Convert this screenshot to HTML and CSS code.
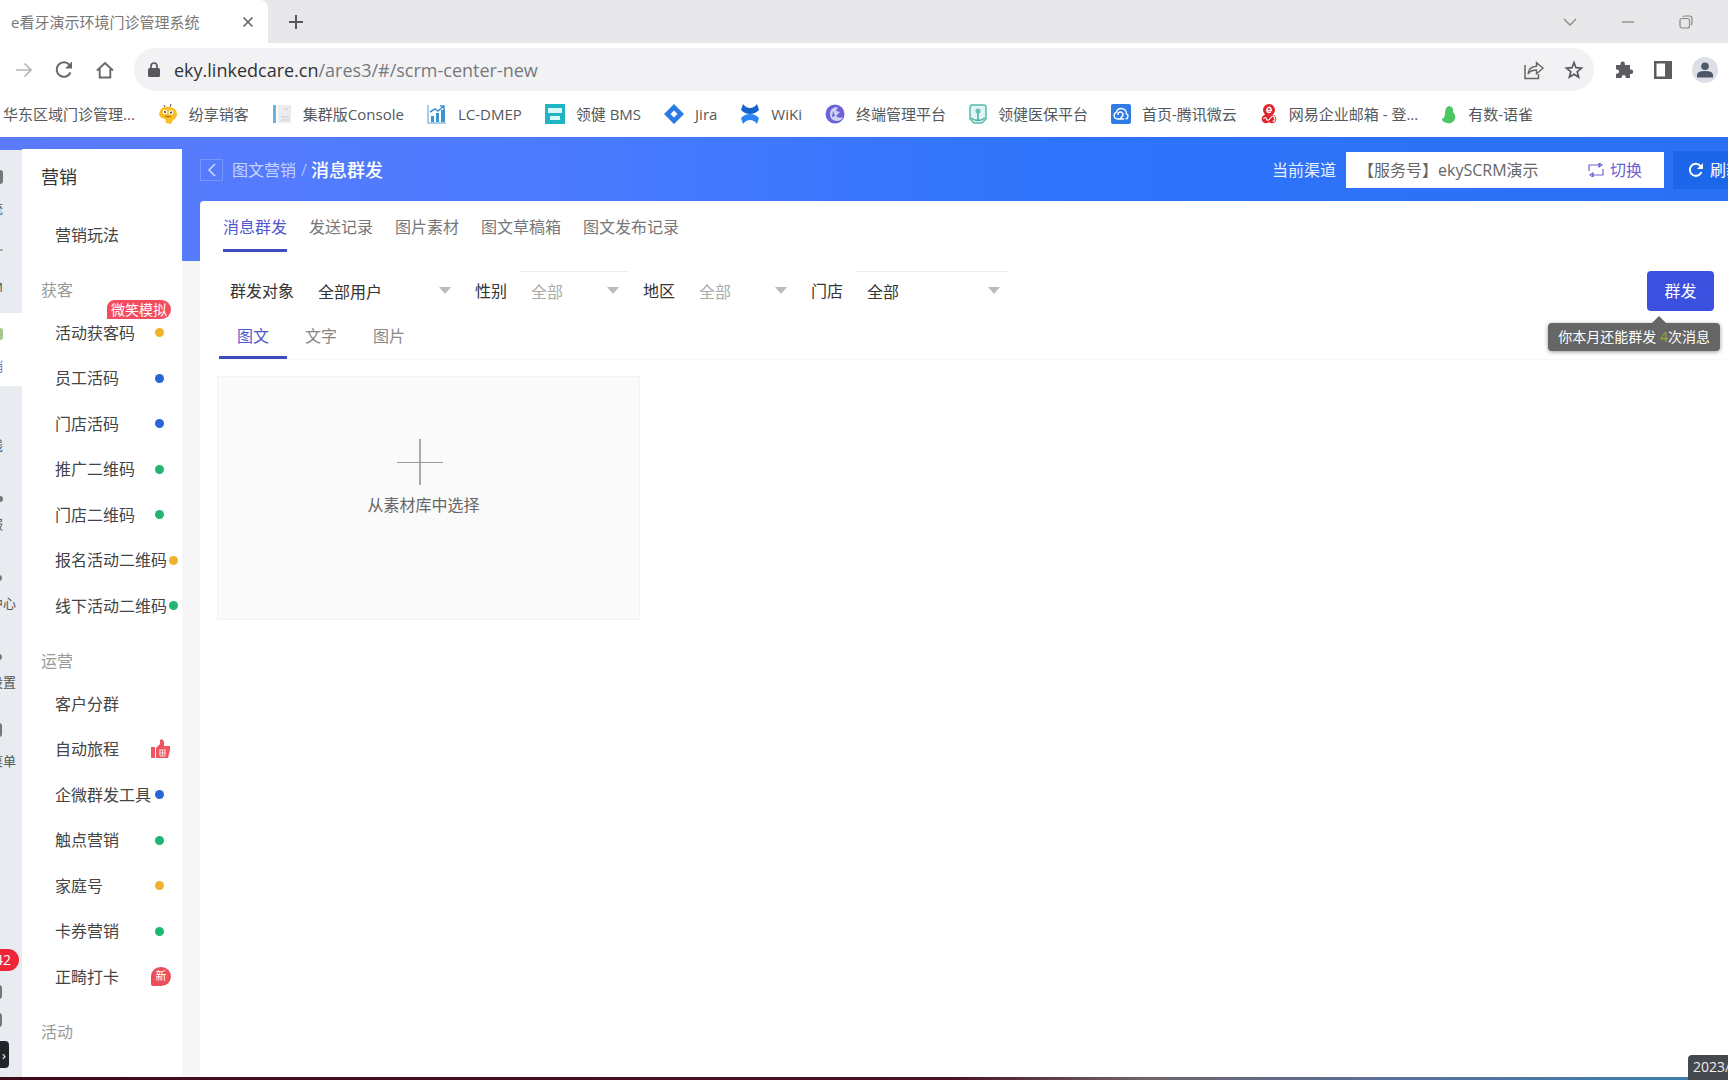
FILE: index.html
```html
<!DOCTYPE html>
<html lang="zh-CN">
<head>
<meta charset="utf-8">
<title>e看牙演示环境门诊管理系统</title>
<link rel="stylesheet" href="styles.css">
</head>
<body>
<div class="browser">
  <div class="tabstrip">
    <div class="tab"><span class="tab-title">e看牙演示环境门诊管理系统</span>
      <button class="icon-btn" aria-label="关闭标签页"><svg width="12" height="12" viewBox="0 0 12 12"><path d="M1.5 1.5l9 9M10.500 1.500l-9 9" stroke="#5f6368" stroke-width="1.600" fill="none"/></svg></button>
    </div>
    <button class="icon-btn new-tab" aria-label="新标签页"><svg width="16" height="16" viewBox="0 0 16 16"><path d="M8 1v14M1 8h14" stroke="#55585c" stroke-width="2" fill="none"/></svg></button>
    <div class="window-controls">
      <button class="icon-btn" aria-label="搜索标签页"><svg width="14" height="10" viewBox="0 0 14 10"><path d="M1 2l6 6 6-6" stroke="#888" stroke-width="1.300" fill="none"/></svg></button>
      <button class="icon-btn" aria-label="最小化"><svg width="12" height="10" viewBox="0 0 12 10"><path d="M0 5h12" stroke="#888" stroke-width="1.300"/></svg></button>
      <button class="icon-btn" aria-label="还原"><svg width="14" height="14" viewBox="0 0 14 14"><rect x="1" y="3.500" width="9.500" height="9.500" rx="2" fill="none" stroke="#888" stroke-width="1.200"/><path d="M4 1.800Q4.500 1 6 1h4.500Q13 1 13 3.500V8q0 1.500-1 2" fill="none" stroke="#888" stroke-width="1.200"/></svg></button>
    </div>
  </div>
  <div class="toolbar">
    <div class="nav-buttons">
      <button class="icon-btn" aria-label="前进"><svg width="16" height="16" viewBox="0 0 16 16"><path d="M0 8h15M8.500 1.500L15 8l-6.500 6.500" stroke="#b4b6b9" stroke-width="1.700" fill="none"/></svg></button>
      <button class="icon-btn" aria-label="重新加载"><svg width="20" height="20" viewBox="0 0 20 20"><path d="M16.500 12.500A7.200 7.200 0 1 1 15.500 5" stroke="#66696d" stroke-width="2" fill="none"/><path d="M18 1.500v7h-7z" fill="#66696d"/></svg></button>
      <button class="icon-btn" aria-label="主页"><svg width="18" height="18" viewBox="0 0 18 18"><path d="M1 9.500L9 2l8 7.500M3.700 8v8.500h10.600V8" stroke="#66696d" stroke-width="1.900" fill="none"/></svg></button>
    </div>
    <div class="omnibox">
      <svg width="12" height="16" viewBox="0 0 12 16"><rect y="6" width="12" height="9" rx="1.500" fill="#55585c"/><path d="M3 6V4a3 3 0 0 1 6 0v2" stroke="#55585c" stroke-width="1.700" fill="none"/></svg>
      <span class="url"><b>eky.linkedcare.cn</b>/ares3/#/scrm-center-new</span>
      <button class="icon-btn" aria-label="分享"><svg width="20" height="20" viewBox="0 0 20 20"><path d="M1 5v13.500h13.500V14" stroke="#666" stroke-width="1.500" fill="none"/><path d="M4 14c.5-5 3.500-7.500 8.500-7.800V2.500L19 8.300l-6.500 5.500V10C8.500 10 6 11 4 14z" stroke="#666" stroke-width="1.400" fill="none"/></svg></button>
      <button class="icon-btn" aria-label="收藏"><svg width="20" height="20" viewBox="0 0 20 20"><path d="M10 2.500l2 5.200 5.500.4-4.300 3.600 1.400 5.500L10 14.200l-4.600 3 1.400-5.500-4.300-3.600 5.500-.4z" stroke="#55585c" stroke-width="1.700" fill="none"/></svg></button>
    </div>
    <button class="icon-btn" aria-label="扩展程序"><svg width="20" height="20" viewBox="0 0 20 20"><path d="M2 5h4.500V3.800a2.200 2.200 0 0 1 4.400 0V5H16v4.500h1a2.200 2.200 0 0 1 0 4.400h-1V18h-4.300v-1a2 2 0 0 0-4 0v1H2v-4.300h1a2 2 0 0 0 0-4.200H2z" fill="#5a5c60"/></svg></button>
    <button class="icon-btn" aria-label="侧边栏"><svg width="18" height="18" viewBox="0 0 18 18"><path d="M0 0h18v18H0zM2.500 2.500v13H11v-13z" fill="#5a5c60" fill-rule="evenodd"/></svg></button>
    <button class="icon-btn avatar" aria-label="用户"><svg width="16" height="16" viewBox="0 0 16 16"><circle cx="8" cy="4.300" r="3.800" fill="#4d5869"/><path d="M0 15.500V13q0-4 8-4t8 4v2.500z" fill="#4d5869"/></svg></button>
  </div>
  <nav class="bookmarks">
    <a href="#"><span>华东区域门诊管理...</span></a>
    <a href="#"><svg width="20" height="22" viewBox="0 0 20 22"><path d="M2 8q2-5 9-4 8 1 8 7 0 4-4 6l-2 4-5-1-1-4Q-1 15 2 8z" fill="#f9bd26"/><circle cx="7" cy="9" r="2.300" fill="#fff"/><circle cx="13" cy="9.500" r="2.300" fill="#fff"/><circle cx="7" cy="9" r="1" fill="#333"/><circle cx="13" cy="9.500" r="1" fill="#333"/><path d="M6 2l1 2M13 1l-1 3" stroke="#555"/><path d="M7 13q3 2 6 0" stroke="#a55c10" fill="none"/></svg><span>纷享销客</span></a>
    <a href="#"><svg width="20" height="20" viewBox="0 0 20 20"><path d="M1 1h3v18H1z" fill="#62b4e4"/><path d="M6 1h13v18H6z" fill="#ececee"/><path d="M12 5h4M9 13h8M9 16h8" stroke="#c7c9d0"/></svg><span>集群版Console</span></a>
    <a href="#"><svg width="20" height="20" viewBox="0 0 20 20"><path d="M1 1v18h18" stroke="#8abfe4" stroke-width="1.500" fill="none"/><path d="M4 12h3v6H4zM9 9h3v9H9zM14 6h4v12h-4z" fill="#3c93d2"/><path d="M3 8l5-3 3 2 6-5M13 2h4v4" stroke="#3c93d2" stroke-width="1.500" fill="none"/></svg><span>LC-DMEP</span></a>
    <a href="#"><svg width="20" height="20" viewBox="0 0 20 20"><path d="M0 0h20v20H0z" fill="#20b5c4"/><path d="M3 4h14v5H3zM5 12h10v4H5z" fill="#d9f8f7"/></svg><span>领健 BMS</span></a>
    <a href="#"><svg width="20" height="20" viewBox="0 0 20 20"><path d="M10 0l10 10-10 10L0 10zM10 6.500L6.500 10l3.500 3.500 3.500-3.500z" fill="#2b79e3" fill-rule="evenodd"/></svg><span>Jira</span></a>
    <a href="#"><svg width="20" height="20" viewBox="0 0 20 20"><path d="M3 0q3 4 7 4t7-4l2 6q-4 4-9 4T1 6z" fill="#1764cf"/><path d="M3 20q3-4 7-4t7 4l2-6q-4-4-9-4t-9 4z" fill="#2d85f5"/></svg><span>WiKi</span></a>
    <a href="#"><svg width="20" height="20" viewBox="0 0 20 20"><circle cx="10" cy="10" r="9.500" fill="#6c62d7"/><path d="M13 3Q5 3 5 10t7 7q4 0 6-4-4 2-7-1l4-4-4-1z" fill="#cfd0f5"/><path d="M8 7l2 5-3 1z" fill="#6c62d7"/></svg><span>终端管理平台</span></a>
    <a href="#"><svg width="18" height="20" viewBox="0 0 18 20"><path d="M3 1h12q2 0 2 3v11l-4 4H5l-4-4V4q0-3 2-3z" fill="#e0f5f0" stroke="#57b9ad" stroke-width="1.500"/><circle cx="9" cy="7" r="2.500" fill="#6bbfb5"/><path d="M9 9v7M2 14q7 5 14 0" stroke="#4cab9f" stroke-width="1.500" fill="none"/></svg><span>领健医保平台</span></a>
    <a href="#"><svg width="20" height="20" viewBox="0 0 20 20"><rect width="20" height="20" rx="2" fill="#2f7ce4"/><path d="M13 15H6.500a3.500 3.500 0 0 1-1-6.800 5 5 0 0 1 9.800 1.300A2.900 2.900 0 0 1 14.500 15M7 11a2.500 2.500 0 1 1 4 1.500L9 15" stroke="#fff" stroke-width="1.400" fill="none"/></svg><span>首页-腾讯微云</span></a>
    <a href="#"><svg width="18" height="20" viewBox="0 0 18 20"><circle cx="9" cy="6" r="6" fill="#e0252f"/><path d="M6.500 6.500h5Q11 3 8.700 3.300 6.500 4 6.700 6.500q.8 3 4.300 1.500" stroke="#fff" stroke-width="1.300" fill="none"/><circle cx="6" cy="15" r="4.300" fill="#e0252f"/><circle cx="12" cy="15" r="4.300" fill="#e0252f"/><path d="M3.500 15q2-3 3 0t4-1 4 0-2 3" stroke="#fff" stroke-width="1.200" fill="none"/></svg><span>网易企业邮箱 - 登...</span></a>
    <a href="#"><svg width="16" height="20" viewBox="0 0 16 20"><path d="M8 2q5 1 4 6 3 3 2 7-2 5-8 4-5-1-5-4 3-1 3-6 0-6 4-7z" fill="#4cc764"/></svg><span>有数-语雀</span></a>
  </nav>
</div>

<div class="app">
  <aside class="rail">
    <ul class="rail-list">
      <li><i class="rail-icon bar"></i><span>系统</span></li>
      <li><i class="rail-icon dash"></i><span>CRM</span></li>
      <li class="current"><i class="rail-icon green"></i><span>营销</span></li>
      <li><span>在线</span></li>
      <li><i class="rail-icon"></i><span>客服</span></li>
      <li><i class="rail-icon"></i><span>中心</span></li>
      <li><i class="rail-icon"></i><span>设置</span></li>
      <li><i class="rail-icon bar"></i><span>菜单</span></li>
    </ul>
    <div class="rail-foot">
      <span class="count">42</span>
      <i class="rail-icon bar"></i>
      <i class="rail-icon bar"></i>
      <button class="collapse" aria-label="展开">›</button>
    </div>
  </aside>
  <nav class="side">
    <h2>营销</h2>
    <ul><li><a href="#">营销玩法</a></li></ul>
    <h3>获客</h3>
    <ul class="group">
      <li><a href="#">活动获客码</a><i class="dot yellow"></i><em class="ribbon">微笑模拟</em></li>
      <li><a href="#">员工活码</a><i class="dot blue"></i></li>
      <li><a href="#">门店活码</a><i class="dot blue"></i></li>
      <li><a href="#">推广二维码</a><i class="dot green"></i></li>
      <li><a href="#">门店二维码</a><i class="dot green"></i></li>
      <li><a href="#">报名活动二维码</a><i class="dot yellow"></i></li>
      <li><a href="#">线下活动二维码</a><i class="dot green"></i></li>
    </ul>
    <h3>运营</h3>
    <ul class="group">
      <li><a href="#">客户分群</a></li>
      <li><a href="#">自动旅程</a><svg class="mark" width="20" height="20" viewBox="0 0 20 20"><path d="M0 8h4v11H0zM5 19V9l4-4V1q3-2 4 2v4h6v4l-2 8z" fill="#ee5560"/><path d="M8 11h7M8 14h7M9 11v6h5v-6M11.500 11v6" stroke="#fbd3d5" fill="none"/></svg></li>
      <li><a href="#">企微群发工具</a><i class="dot blue"></i></li>
      <li><a href="#">触点营销</a><i class="dot green"></i></li>
      <li><a href="#">家庭号</a><i class="dot yellow"></i></li>
      <li><a href="#">卡券营销</a><i class="dot green"></i></li>
      <li><a href="#">正畸打卡</a><span class="mark new">新</span></li>
    </ul>
    <h3>活动</h3>
  </nav>

  <div class="content">
    <header class="head">
      <button class="back" aria-label="返回"><svg width="8" height="14" viewBox="0 0 8 14"><path d="M7 1L1 7l6 6" stroke="#cfdcff" stroke-width="1.500" fill="none"/></svg></button>
      <a class="crumb" href="#">图文营销</a><span class="slash">/</span><h1>消息群发</h1>
      <span class="channel-label">当前渠道</span>
      <div class="channel"><span>【服务号】ekySCRM演示</span>
        <button class="switch"><svg width="16" height="14" viewBox="0 0 16 14"><path d="M1 8V2h11M15 6v6H4M11 0l3 2-3 2zM5 10l-3 2 3 2z" stroke="#6a63d4" stroke-width="1.200" fill="none"/></svg>切换</button>
      </div>
      <button class="refresh"><svg width="16" height="16" viewBox="0 0 16 16"><path d="M13.500 10A6 6 0 1 1 12.500 4" stroke="#fff" stroke-width="2" fill="none"/><path d="M15 1v6H9z" fill="#fff"/></svg>刷新</button>
    </header>
    <main class="panel">
      <nav class="tabs">
        <a class="on" href="#">消息群发</a><a href="#">发送记录</a><a href="#">图片素材</a><a href="#">图文草稿箱</a><a href="#">图文发布记录</a>
      </nav>
      <form class="filters">
        <label for="target">群发对象</label>
        <div class="pick wide"><select id="target"><option>全部用户</option></select></div>
        <label for="sex">性别</label>
        <div class="pick muted lined"><select id="sex"><option>全部</option></select></div>
        <label for="area">地区</label>
        <div class="pick muted"><select id="area"><option>全部</option></select></div>
        <label for="store">门店</label>
        <div class="pick wide lined"><select id="store"><option>全部</option></select></div>
        <div class="send-wrap">
          <button type="button" class="send">群发</button>
          <div class="tip" role="tooltip">你本月还能群发 <b>4</b>次消息</div>
        </div>
      </form>
      <nav class="kinds">
        <a class="on" href="#">图文</a><a href="#">文字</a><a href="#">图片</a>
      </nav>
      <button class="picker">
        <svg width="46" height="46" viewBox="0 0 46 46"><path d="M23 0v46" stroke="#aaa" stroke-width="2"/><path d="M0 23.500h46" stroke="#999"/></svg>
        <span>从素材库中选择</span>
      </button>
    </main>
  </div>
</div>
<div class="taskbar"></div>
<div class="clock">2023/08/15</div>
</body>
</html>
```
FILE: styles.css
```css
* { box-sizing: border-box; }
body {
  margin: 0;
  height: 100vh;
  display: flex;
  flex-direction: column;
  overflow: hidden;
  position: relative;
  background: #fff;
  color: #444;
  font: 16px/24px "Open Sans", "Noto Sans CJK SC", sans-serif;
}
button, select { font: inherit; color: inherit; border: 0; background: none; padding: 0; margin: 0; }
a { color: inherit; text-decoration: none; }
ul { list-style: none; margin: 0; padding: 0; }
h1, h2, h3 { margin: 0; font-weight: 400; }
svg { display: block; flex: none; }
span, a, label, button { white-space: nowrap; }

/* browser frame */
.browser { flex: none; color: #55585c; }
.tabstrip { display: flex; align-items: center; height: 43px; background: #e8e8ea; }
.tab {
  display: flex; align-items: center; justify-content: space-between;
  width: 268px; height: 43px; padding: 0 14px 0 11px;
  background: #fff; border-radius: 0 8px 0 0; font-size: 15px; color: #777;
}
.icon-btn { display: grid; place-items: center; flex: none; }
.new-tab { margin-left: 20px; }
.window-controls { display: flex; gap: 45px; margin-left: auto; padding-right: 35px; }
.toolbar { display: flex; align-items: center; height: 53px; padding: 0 10px 0 16px; gap: 20px; }
.nav-buttons { display: flex; align-items: center; gap: 22px; }
.omnibox {
  flex: 1; display: flex; align-items: center; gap: 20px;
  height: 43px; padding: 0 10px 0 14px;
  border-radius: 22px; background: #f2f2f5;
}
.url { flex: 1; margin-left: -6px; font-size: 18px; color: #77797d; }
.url b { font-weight: 400; color: #333; }
.avatar { width: 26px; height: 26px; border-radius: 50%; background: #dcdfe5; }
.bookmarks { display: flex; align-items: center; gap: 23px; height: 41px; padding: 0 0 6px 3px; font-size: 15px; }
.bookmarks a { display: flex; align-items: center; gap: 11px; }

/* application shell */
.app { flex: 1; display: flex; min-height: 0; background: linear-gradient(90deg, #5b7bfa 0, #4d7bff 30%, #2f74fb 60%, #2a70f4 100%) 0 0 / 100% 124px no-repeat #f6f6f8; }
.rail { flex: none; display: flex; flex-direction: column; justify-content: space-between; width: 22px; margin-top: 13px; padding: 5px 0 12px; overflow: hidden; background: #e8ebf0; font-size: 13px; color: #555; }
.rail-list { display: flex; flex-direction: column; gap: 6px; }
.rail-list li { display: flex; flex-direction: column; align-items: flex-end; height: 73px; padding: 15px 6px 8px 0; }
.rail-list li:nth-child(-n+5) { padding-right: 19px; }
.rail-list .current { background: #fff; color: #7773c8; }
.rail-list span { margin-top: auto; }
.rail-icon { width: 8px; height: 6px; margin: 10px 14px 0 0; border-radius: 3px; background: #777; }
.rail-list li:nth-child(-n+5) .rail-icon { margin-right: 0; }
.rail-icon.bar { height: 14px; margin-top: 0; }
.rail-icon.dash { height: 2px; margin-top: 0; background: #aaa; }
.rail-icon.green { height: 12px; margin-top: 0; background: #a4c98a; }
.rail-foot { display: flex; flex-direction: column; align-items: flex-end; gap: 14px; padding-right: 3px; }
.rail-foot .rail-icon { margin-right: 17px; }
.count { padding: 0 8px; border-radius: 11px; background: #ee2438; color: #fff; font-size: 14px; line-height: 22px; }
.collapse { width: 24px; height: 27px; margin-right: 10px; border-radius: 4px; background: #222429; color: #fff; text-align: right; padding-right: 3px; }

.side { flex: none; width: 160px; margin-top: 12px; padding-top: 16px; background: #fff; color: #444; overflow: hidden; }
.side h2 { padding-left: 19px; font-size: 18px; line-height: 24px; color: #333; }
.side h3 { padding: 21px 0 8px 19px; font-size: 16px; line-height: 24px; color: #999; }
.side h2 + ul { padding-top: 23px; }
.group { display: flex; flex-direction: column; justify-content: space-between; min-height: 318px; }
.side li { position: relative; display: flex; align-items: center; justify-content: space-between; height: 45px; padding: 0 18px 0 33px; }
.dot { flex: none; width: 9px; height: 9px; margin-left: 2px; border-radius: 50%; }
.yellow { background: #f3b02b; }
.blue { background: #2765d8; }
.dot.green { background: #1fb573; }
.mark { margin-right: -7px; }
.new { width: 20px; height: 19px; border-radius: 10px 10px 10px 2px; background: #ed4e5b; color: #fff; font-size: 11px; line-height: 18px; text-align: center; }
.ribbon { position: absolute; right: 11px; top: -10px; padding: 0 4px; border-radius: 8px 10px 10px 0; background: #f24c5e; color: #fff; font-size: 14px; font-style: normal; line-height: 19px; }

.content { flex: 1; min-width: 0; display: flex; flex-direction: column; padding-left: 18px; }
.head { flex: none; display: flex; align-items: center; height: 64px; padding-top: 2px; color: #e8efff; overflow: hidden; }
.back { display: grid; place-items: center; width: 23px; height: 22px; border: 1px solid #7896ff; }
.crumb { margin-left: 9px; color: #c4d3ff; }
.slash { margin: 0 4px 0 5px; color: #a9bfff; }
.head h1 { font-size: 18px; font-weight: 500; color: #fff; }
.channel-label { margin-left: auto; }
.channel { display: flex; align-items: center; justify-content: space-between; width: 318px; height: 36px; margin-left: 10px; padding: 0 22px 0 12px; background: #fff; color: #666; }
.switch { display: flex; align-items: center; gap: 6px; color: #6a63d4; }
.refresh { display: flex; align-items: center; gap: 6px; width: 96px; height: 38px; margin: 0 -41px 0 9px; padding-left: 15px; background: #1c66ea; color: #fff; }

.panel { flex: 1; min-height: 0; background: #fff; border-radius: 4px 0 0 0; color: #777; }
.tabs { display: flex; gap: 22px; padding: 14px 23px 0; }
.tabs a { padding-bottom: 10px; border-bottom: 3px solid transparent; }
.tabs .on, .kinds .on { color: #5058cf; border-color: #3e4bc0; }
.filters { display: flex; align-items: center; height: 40px; margin-top: 19px; padding: 0 14px 0 30px; color: #333; }
.pick { position: relative; width: 109px; height: 40px; margin: 0 15px 0 12px; border-top: 1px solid transparent; }
.pick.wide { width: 154px; }
.pick.lined { border-top-color: #eee; }
.pick select { width: 100%; height: 100%; padding-left: 12px; appearance: none; outline: 0; }
.pick.muted select { color: #aaa; }
.pick::after { content: ""; position: absolute; right: 9px; top: 15px; border: 6px solid transparent; border-top: 7px solid #bbb; border-bottom: 0; pointer-events: none; }
.send-wrap { position: relative; margin-left: auto; }
.send { width: 67px; height: 40px; border-radius: 4px; background: #3c50e0; color: #fff; }
.tip { position: absolute; right: -6px; top: 52px; padding: 0 10px; border-radius: 4px; background: #666; color: #fff; font-size: 14px; line-height: 28px; white-space: nowrap; box-shadow: 0 1px 4px #0006; }
.tip::before { content: ""; position: absolute; right: 54px; top: -7px; border: 7px solid transparent; border-top: 0; border-bottom-color: #666; }
.tip b { font-weight: 400; color: #8db31f; }
.kinds { display: flex; margin: 12px 0 0 19px; border-bottom: 1px solid #f8f8f8; }
.kinds a { padding: 1px 18px 8px; border-bottom: 3px solid transparent; color: #888; }
.picker { display: flex; flex-direction: column; align-items: center; width: 423px; height: 244px; margin: 16px 0 0 17px; padding: 62px 10px 0 0; gap: 8px; background: #fafafa; border: 1px solid #f3f3f3; color: #666; }
.picker svg { margin-right: 8px; }

.taskbar { position: absolute; left: 0; right: 0; bottom: 0; height: 3px; background: linear-gradient(90deg, #3d0a1c 0, #4a1226 55%, #6f6468 66%, #5a6f9a 80%, #3f7da8 95%); }
.clock { position: absolute; left: calc(100% - 40px); bottom: 0; width: 96px; height: 25px; padding-left: 5px; border-radius: 4px 0 0 0; background: #45484c; color: #eee; font-size: 14px; }
```
